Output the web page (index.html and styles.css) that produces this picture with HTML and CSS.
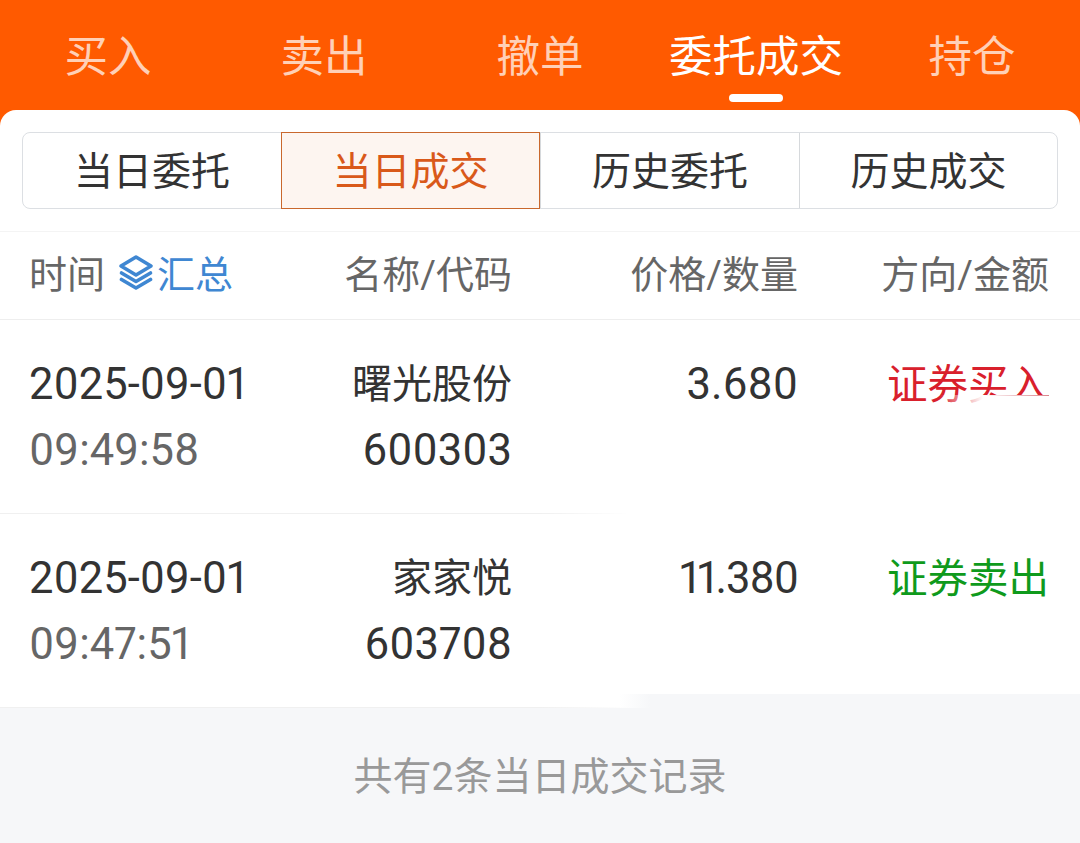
FILE: index.html
```html
<!DOCTYPE html>
<html lang="zh-CN">
<head>
    <meta charset="UTF-8">
    <meta name="viewport" content="width=device-width, initial-scale=1.0">
    <title>委托成交</title>
    <link rel="stylesheet" href="styles.css">
</head>
<body>
    <nav class="top-nav">
        <a class="nav-item">买入</a>
        <a class="nav-item">卖出</a>
        <a class="nav-item">撤单</a>
        <a class="nav-item active">委托成交</a>
        <a class="nav-item">持仓</a>
    </nav>

    <main class="panel">
        <div class="sub-tabs">
            <button class="sub-tab">当日委托</button>
            <button class="sub-tab active">当日成交</button>
            <button class="sub-tab">历史委托</button>
            <button class="sub-tab">历史成交</button>
        </div>

        <div class="list-head row-grid">
            <div class="head-time">
                时间
                <span class="summary">
                    <svg class="summary-icon" viewBox="0 0 36 36" fill="none" stroke="currentColor" stroke-width="3.6" stroke-linejoin="round" stroke-linecap="round">
                        <path d="M18 3 L33 12 L18 21 L3 12 Z"/>
                        <path d="M3.5 19 L18 27.5 L32.5 19"/>
                        <path d="M3.5 25.5 L18 34 L32.5 25.5"/>
                    </svg>汇总
                </span>
            </div>
            <div class="cell-right">名称/代码</div>
            <div class="cell-right">价格/数量</div>
            <div class="cell-right">方向/金额</div>
        </div>

        <div class="trade row-grid">
            <div>
                <div class="main-val num">2025-09-01</div>
                <div class="sub-val num">09:49:58</div>
            </div>
            <div class="cell-right">
                <div class="main-val">曙光股份</div>
                <div class="code-val num">600303</div>
            </div>
            <div class="cell-right">
                <div class="main-val num">3.680</div>
            </div>
            <div class="cell-right">
                <div class="main-val dir-buy">证券买入</div>
            </div>
        </div>

        <div class="trade row-grid">
            <div>
                <div class="main-val num">2025-09-01</div>
                <div class="sub-val num">09:47:51</div>
            </div>
            <div class="cell-right">
                <div class="main-val">家家悦</div>
                <div class="code-val num">603708</div>
            </div>
            <div class="cell-right">
                <div class="main-val num price-val">11.380</div>
            </div>
            <div class="cell-right">
                <div class="main-val dir-sell">证券卖出</div>
            </div>
        </div>

        <footer class="list-foot">共有2条当日成交记录</footer>
    </main>
</body>
</html>
```

FILE: styles.css
```css
* {
    margin: 0;
    padding: 0;
    box-sizing: border-box;
}

html, body {
    height: 843px;
    overflow: hidden;
}

body {
    font-family: Roboto, "Noto Sans CJK SC", sans-serif;
    background-color: #ff5a00;
    color: #333;
}

.top-nav {
    display: grid;
    grid-template-columns: repeat(5, 216px);
    height: 110px;
}

.nav-item {
    position: relative;
    padding-top: 28px;
    font-size: 43.5px;
    line-height: 60px;
    text-align: center;
    color: rgba(255, 255, 255, 0.72);
    white-space: nowrap;
}

.nav-item.active {
    color: #fff;
}

.nav-item.active::after {
    content: "";
    position: absolute;
    left: 81px;
    bottom: 8px;
    width: 54px;
    height: 8px;
    border-radius: 4px;
    background-color: #fff;
}

.panel {
    height: 733px;
    border-radius: 16px 16px 0 0;
    background-color: #fff;
    padding-top: 22px;
    display: flex;
    flex-direction: column;
}

.sub-tabs {
    display: grid;
    grid-template-columns: 258px 259px 259px 1fr;
    height: 77px;
    margin: 0 22px;
    border: 1px solid #dcdfe3;
    border-radius: 8px;
}

.sub-tab {
    border: none;
    border-left: 1px solid #d6d9dc;
    background: none;
    padding-bottom: 6px;
    font-family: inherit;
    font-size: 39px;
    color: #333;
}

.sub-tab:first-child {
    border-left: none;
}

.sub-tab.active {
    margin: -1px 0;
    border: 1px solid #c9682d;
    background-color: #fdf5f0;
    color: #d9591a;
}

.row-grid {
    display: grid;
    grid-template-columns: 200px 283px 286px 251px;
    padding: 0 31px 0 29px;
}

.cell-right {
    text-align: right;
}

.list-head {
    height: 89px;
    margin-top: 22px;
    padding-bottom: 8px;
    border-top: 1px solid #f4f4f4;
    border-bottom: 1px solid #eee;
    align-items: center;
    font-size: 38px;
    color: #666;
    white-space: nowrap;
}

.head-time {
    display: flex;
    align-items: center;
}

.summary {
    display: flex;
    align-items: center;
    margin-left: 13px;
    color: #3f87d2;
}

.summary-icon {
    width: 36px;
    height: 36px;
    margin-right: 3px;
}

.trade {
    height: 194px;
    padding-top: 37px;
    background-image: linear-gradient(to right, #f0f0f0 0, #f0f0f0 540px, #fff 630px);
    background-size: 100% 1px;
    background-repeat: no-repeat;
    background-position: bottom;
}

.main-val {
    font-size: 40px;
    line-height: 56px;
    white-space: nowrap;
}

.sub-val,
.code-val {
    margin-top: 10px;
    line-height: 56px;
    color: #666;
    white-space: nowrap;
}

.code-val {
    color: #333;
}

.num {
    font-size: 43.5px;
    font-variant-numeric: proportional-nums;
}

.price-val {
    letter-spacing: -1px;
}

.dir-buy,
.dir-sell {
    font-size: 40.5px;
}

.dir-buy {
    position: relative;
    color: #d9202c;
}

/* 截图里"买入"下半部分被抹掉了 */
.dir-buy::after {
    content: "";
    position: absolute;
    right: 0;
    top: 38px;
    width: 110px;
    height: 14px;
    background-image:
        linear-gradient(to right, rgba(217, 130, 138, 0) 40%, #d9828a),
        linear-gradient(to right, rgba(255, 255, 255, 0), #fff 40%);
    background-size: 100% 1px, 100% 100%;
    background-repeat: no-repeat;
}

.dir-sell {
    color: #0f9a1c;
}

.list-foot {
    position: relative;
    flex: 1;
    padding-top: 41px;
    background-color: #f6f7f9;
    font-size: 39px;
    line-height: 56px;
    text-align: center;
    color: #999;
}

/* 右侧灰底比左侧高一截 */
.list-foot::before {
    content: "";
    position: absolute;
    left: 620px;
    right: 0;
    top: -14px;
    height: 14px;
    background-image: linear-gradient(to right, rgba(246, 247, 249, 0), #f6f7f9 30px);
}
```
